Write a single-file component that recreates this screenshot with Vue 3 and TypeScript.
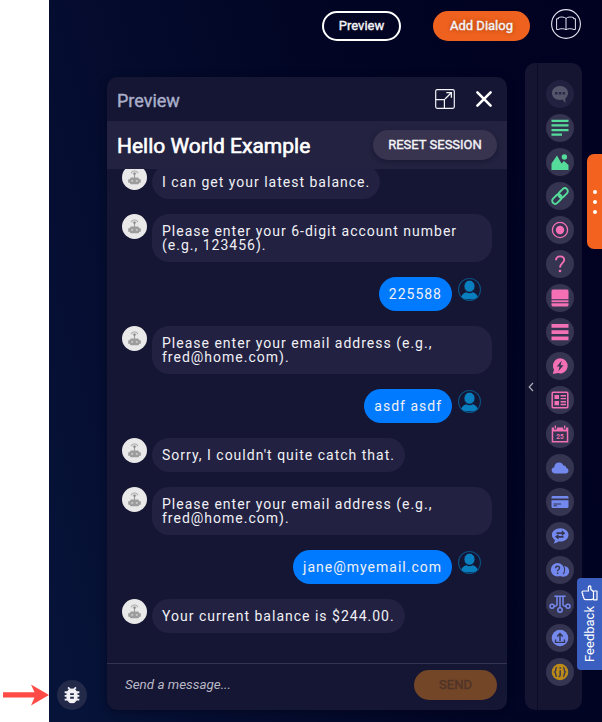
<script setup lang="ts">
interface Message {
  from: 'bot' | 'user'
  text: string
}

const messages: Message[] = [
  { from: 'bot', text: 'I can get your latest balance.' },
  { from: 'bot', text: 'Please enter your 6-digit account number (e.g., 123456).' },
  { from: 'user', text: '225588' },
  { from: 'bot', text: 'Please enter your email address (e.g., fred@home.com).' },
  { from: 'user', text: 'asdf asdf' },
  { from: 'bot', text: "Sorry, I couldn't quite catch that." },
  { from: 'bot', text: 'Please enter your email address (e.g., fred@home.com).' },
  { from: 'user', text: 'jane@myemail.com' },
  { from: 'bot', text: 'Your current balance is $244.00.' },
]

type Tone = 'muted' | 'green' | 'pink' | 'blue' | 'gold'

const tools: { name: string; tone: Tone }[] = [
  { name: 'chat', tone: 'muted' },
  { name: 'text', tone: 'green' },
  { name: 'image', tone: 'green' },
  { name: 'link', tone: 'green' },
  { name: 'radio', tone: 'pink' },
  { name: 'question', tone: 'pink' },
  { name: 'card', tone: 'pink' },
  { name: 'list', tone: 'pink' },
  { name: 'quick', tone: 'pink' },
  { name: 'form', tone: 'pink' },
  { name: 'calendar', tone: 'pink' },
  { name: 'cloud', tone: 'blue' },
  { name: 'payment', tone: 'blue' },
  { name: 'transfer', tone: 'blue' },
  { name: 'faq', tone: 'blue' },
  { name: 'branch', tone: 'blue' },
  { name: 'upload', tone: 'blue' },
  { name: 'json', tone: 'gold' },
]
</script>

<template>
  <div class="page">
    <aside class="gutter">
      <svg class="arrow" width="46" height="22" viewBox="0 0 46 22">
        <path d="M0 8.3H31.5L28 0.5L46 11L28 21.5L31.5 13.5H0Z" fill="#ff4b45" />
      </svg>
    </aside>

    <main class="stage">
      <header class="topbar">
        <button class="btn outline">Preview</button>
        <button class="btn primary">Add Dialog</button>
        <button class="docs" aria-label="Docs">
          <svg width="30" height="30" viewBox="0 0 30 30" fill="none" stroke="#e6e6f2">
            <circle cx="15" cy="15" r="14.4" stroke-width="1.1" />
            <path
              d="M15 9.500C13.500 7.900 10.500 7.600 7.500 8.500V9.700H5.600V20.500H7C10 19.300 13 19.500 15 20.700C17 19.500 20 19.300 23 20.500H24.400V9.700H22.500V8.500C19.500 7.600 16.500 7.900 15 9.500ZM15 9.500V20.700"
              stroke-width="1"
            />
          </svg>
        </button>
      </header>

      <div class="workspace">
        <div class="rail">
          <button class="bug" aria-label="Debug">
            <svg width="22" height="22" viewBox="0 0 24 24" fill="#f1f1f5">
              <path
                d="M20 8h-2.8a6 6 0 0 0-1.8-2L17 4.4 15.6 3l-2.2 2.2a6 6 0 0 0-2.8 0L8.4 3 7 4.4 8.6 6a6 6 0 0 0-1.8 2H4v2h2.1l-.1 1v1H4v2h2v1l.1 1H4v2h2.8a6 6 0 0 0 10.4 0H20v-2h-2.1l.1-1v-1h2v-2h-2v-1l-.1-1H20Zm-6 8h-4v-2h4Zm0-4h-4v-2h4Z"
              />
            </svg>
          </button>
        </div>

        <section class="panel">
          <div class="panel-head">
            <span class="panel-title">Preview</span>
            <svg class="expand" width="20" height="20" viewBox="0 0 20 20" fill="none" stroke="#f2f2f7">
              <rect x=".7" y=".7" width="18.6" height="18.6" rx="1.5" stroke-width="1.2" />
              <path d="M.7 10.6H9.4V19.3" stroke-width="1.2" />
              <path d="M10 10L16 4M11.3 3.6H16.4V8.7" stroke-width="1.3" />
            </svg>
            <svg class="close" width="18" height="18" viewBox="0 0 18 18" stroke="#fff" stroke-width="2.6" stroke-linecap="round">
              <path d="M2.4 2.4L15.6 15.6M15.6 2.4L2.4 15.6" />
            </svg>
          </div>

          <div class="panel-sub">
            <h1>Hello World Example</h1>
            <button class="btn reset">RESET SESSION</button>
          </div>

          <div class="thread">
            <div v-for="(m, i) in messages" :key="i" class="row" :class="m.from">
              <svg v-if="m.from === 'bot'" class="avatar" width="25" height="25" viewBox="0 0 25 25">
                <circle cx="12.5" cy="12.5" r="12.5" fill="#e9e9e9" />
                <g fill="none" stroke="#b5b5b5">
                  <path d="M9 8.2A3.8 3.8 0 0 1 16 8.2" stroke-width="1.2" />
                  <path d="M10.7 9A2 2 0 0 1 14.3 9" stroke-width=".8" />
                  <path d="M12.5 8.6V13" stroke="#9b9b9b" stroke-width="1.1" />
                </g>
                <circle cx="12.5" cy="8.8" r="1.2" fill="#8d8d8d" />
                <path d="M8.800 12.600H16.200L17.300 14.200H18.800V17.800H17.300L16.500 19.300H8.500L7.700 17.800H6.200V14.200H7.700Z" fill="#9c9c9c" />
                <rect x="9.2" y="15" width="2" height="1.700" rx=".8" fill="#cfcfcf" />
                <rect x="13.8" y="15" width="2" height="1.700" rx=".8" fill="#cfcfcf" />
              </svg>
              <p class="bubble">{{ m.text }}</p>
              <svg v-if="m.from === 'user'" class="avatar" width="25" height="25" viewBox="0 0 25 25">
                <circle cx="12.5" cy="12.5" r="11" fill="none" stroke="#0b4f80" stroke-width="1.1" />
                <path
                  d="M4.3 20C5.2 17 7 15.7 9.5 15.3C11.2 16.7 13.8 16.7 15.5 15.3C18 15.7 19.8 17 20.7 20C18.600 22 15.800 22.300 12.500 22.300S6.400 22 4.300 20Z"
                  fill="#0a7fc0"
                />
                <ellipse cx="12.5" cy="9.2" rx="5.500" ry="6" fill="#0a7fc0" stroke="#151534" stroke-width=".8" />
              </svg>
            </div>
          </div>

          <footer class="composer">
            <span class="placeholder">Send a message...</span>
            <button class="btn send">SEND</button>
          </footer>
        </section>

        <nav class="tools">
          <div class="handle">
            <svg width="6" height="10" viewBox="0 0 6 10" fill="none" stroke="#b4b4c0" stroke-width="1.1">
              <path d="M5 1L1.2 5L5 9" />
            </svg>
          </div>
          <div class="tool-list">
            <div v-for="t in tools" :key="t.name" class="tool" :class="t.tone">
              <svg width="18" height="18" viewBox="0 0 18 18" fill="currentColor">
                <g v-if="t.name === 'chat'">
                  <path d="M9 1C4.3 1 1 4 1 8s3.3 7 8 7c1 0 1.800-.1 2.600-.4L14.300 18V13.300C16 12 17 10.200 17 8c0-4-3.300-7-8-7Z" />
                  <path d="M4 7H6.500V9.500H4ZM7.800 7H10.300V9.500H7.800ZM11.600 7H14.100V9.500H11.600Z" class="hole" />
                </g>
                <path v-else-if="t.name === 'text'" d="M.5.700H17.500V3H.5ZM.5 5.300H17.500V7.600H.5ZM.5 9.900H17.500V12.200H.5ZM.5 14.500H11V16.800H.5Z" />
                <g v-else-if="t.name === 'image'">
                  <path d="M.5 17V10.500L6 2.500L10.500 10.500L13 8L17.500 12V17Z" />
                  <circle cx="13.400" cy="4" r="2.700" />
                </g>
                <g v-else-if="t.name === 'link'" fill="none" stroke="currentColor" stroke-width="1.900">
                  <rect x="-5.400" y="-3" width="10.800" height="6" rx="3" transform="translate(12.100 5.900) rotate(-45)" />
                  <rect x="-5.400" y="-3" width="10.800" height="6" rx="3" transform="translate(5.900 12.100) rotate(-45)" />
                </g>
                <g v-else-if="t.name === 'radio'">
                  <circle cx="9" cy="9" r="7.600" fill="none" stroke="currentColor" stroke-width="1.300" />
                  <circle cx="9" cy="9" r="4.200" />
                </g>
                <g v-else-if="t.name === 'question'">
                  <path d="M5 5.200C5 2.700 6.700 1.400 9 1.400S13.200 2.800 13.200 5C13.200 8 9 8.400 9 12.500" fill="none" stroke="currentColor" stroke-width="1.900" />
                  <circle cx="9" cy="16" r="1.300" />
                </g>
                <g v-else-if="t.name === 'card'">
                  <path d="M2 .5H16Q17.500.5 17.500 2V10.200H.5V2Q.5.5 2 .5ZM.5 11.200H17.500V13.200H.5ZM.5 14.200H17.500V16Q17.500 17.500 16 17.500H2Q.5 17.500.5 16Z" />
                </g>
                <path v-else-if="t.name === 'list'" d="M.5 1H17.500V4.700H.5ZM.5 7.200H17.500V11H.5ZM.5 13.500H17.500V17.200H.5Z" />
                <g v-else-if="t.name === 'quick'">
                  <path d="M9.300 1.200A7.600 7.600 0 1 1 7 16.100L1.800 17L3 12.700A7.600 7.600 0 0 1 9.300 1.200Z" />
                  <path d="M10.700 3.800L5.700 9.500H8.600L7.300 14.200L12.600 8.200H9.600Z" class="hole" />
                </g>
                <g v-else-if="t.name === 'form'">
                  <rect x="1.200" y="1.200" width="15.600" height="15.600" rx="1" fill="none" stroke="currentColor" stroke-width="1.500" />
                  <path d="M3.500 4H8V8H3.500ZM3.500 10H8V14.200H3.500ZM9.600 4H15V5.500H9.600ZM9.600 6.900H15V8.300H9.600ZM9.600 10H15V11.400H9.600ZM9.600 12.800H15V14.200H9.600Z" />
                </g>
                <g v-else-if="t.name === 'calendar'">
                  <path d="M.7 2.600H3V4.500H5.800V2.600H12.200V4.500H15V2.600H17.300V17.500H.7ZM2.200 6.600V16H15.800V6.600Z" fill-rule="evenodd" />
                  <path d="M3.700.5H5V3.500H3.700ZM13 .5H14.300V3.500H13Z" />
                  <text x="9" y="13.900" text-anchor="middle" class="day">25</text>
                </g>
                <path v-else-if="t.name === 'cloud'" d="M4.300 14.500C2.200 14.500.6 13.200.6 11.300C.6 9.600 1.800 8.400 3.300 8.200C3.300 5.300 5.300 3.500 8 3.500C10.200 3.500 11.800 4.700 12.300 6.600C14 6.200 15.300 7.400 15.300 9C16.700 9.300 17.500 10.400 17.500 11.700C17.500 13.300 16.300 14.500 14.500 14.500Z" />
                <g v-else-if="t.name === 'payment'">
                  <path d="M1.800 3H16.200Q17.500 3 17.500 4.300V5.500H.5V4.300Q.5 3 1.800 3ZM.5 7.300H17.500V13.700Q17.500 15 16.200 15H1.800Q.5 15 .5 13.700Z" />
                  <path d="M2.500 10.600H10V11.500H2.500ZM2.500 12.300H6V13.200H2.500Z" class="hole" />
                </g>
                <g v-else-if="t.name === 'transfer'">
                  <path d="M9.300 1.200C4.600 1.200.9 4.200.9 7.900C.9 9.900 2.200 11.700 3.900 12.900C3.900 14.300 3.200 15.600 2.500 16.600C4.600 16.300 6.200 15.500 7.300 14.500C13 15.100 17.500 12 17.500 7.900C17.500 4.200 14 1.200 9.300 1.200Z" />
                  <path d="M5.500 7V5.300H10.800V3.300L14.300 6.200L10.800 9.100V7ZM12.500 9V10.700H7.500V12.600L4 9.800L7.500 7V9Z" class="hole" />
                </g>
                <g v-else-if="t.name === 'faq'">
                  <circle cx="13" cy="10.200" r="5.200" />
                  <circle cx="6.700" cy="8.700" r="7.500" class="hole" />
                  <circle cx="6.500" cy="8.700" r="6.700" />
                  <path d="M12 11.500L12.800 15.800L8 14.900Z" />
                  <path d="M4.600 7.200Q4.600 5.200 6.600 5.200T8.500 7Q8.500 8.300 6.600 9.500V10.300M6.600 11.600V12.900" class="cut" />
                </g>
                <g v-else-if="t.name === 'branch'" fill="none" stroke="currentColor" stroke-width="1.500">
                  <path d="M3.300 1.200H14.700M6 1.200V9.500Q6 11.500 1.500 11.500M9 1.200V13M12 1.200V9.500Q12 11.500 16.500 11.500" />
                  <g class="node">
                    <circle cx="1" cy="11.300" r="2" /><circle cx="9" cy="15" r="2.200" /><circle cx="17" cy="11.300" r="2" />
                  </g>
                </g>
                <g v-else-if="t.name === 'upload'">
                  <circle cx="9" cy="9" r="8.300" />
                  <path d="M9 12V5M6.200 7.400L9 4.600L11.800 7.400M4.500 10.500V13.400H13.500V10.500" class="cut" />
                </g>
                <g v-else>
                  <circle cx="9" cy="9" r="8.300" />
                  <path d="M5.900 4.500C4 4.500 5.500 8 3.700 9C5.500 10 4 13.500 5.900 13.500M12.100 4.500C14 4.500 12.500 8 14.300 9C12.500 10 14 13.500 12.100 13.500M9.200 4.300V5.700M9.200 7.200V12.300Q9.200 13.500 7.700 13.500" class="cut" />
                </g>
              </svg>
            </div>
          </div>
        </nav>
      </div>

      <div class="more"><i></i><i></i><i></i></div>

      <div class="feedback">
        <svg width="17" height="17" viewBox="0 0 17 17" fill="none" stroke="#fff" stroke-width="1.200" stroke-linejoin="round">
          <path d="M16 6H12.500V14.800H16ZM12.500 6.800L9.800 4.200V1.800Q9.800 .9 8.900 .9Q7 1.100 7.300 4L7.600 6H2.400Q1 6 1 7.300Q1 8.300 1.800 8.700Q1.200 10.200 2.300 11Q2 12.300 2.900 12.900Q2.900 14.600 4.500 14.600H10.500L12.500 13.800" />
        </svg>
        <span>Feedback</span>
      </div>
    </main>
  </div>
</template>

<style>
body {
  background: #fff;
}
</style>

<style scoped>
.page {
  display: grid;
  grid-template-columns: 49px 1fr;
  width: 602px;
  height: 722px;
  overflow: hidden;
  font-family: Roboto, 'Liberation Sans', sans-serif;
}
.gutter {
  display: flex;
  flex-direction: column;
  justify-content: flex-end;
  align-items: flex-end;
  padding-bottom: 16px;
}
.stage {
  position: relative;
  background: linear-gradient(75deg, #07143a 0%, #050d30 25%, #020524 60%, #010122 100%);
}
.topbar {
  display: flex;
  height: 63px;
  padding: 9px 21px 0 273px;
  box-sizing: border-box;
}
.btn {
  box-sizing: border-box;
  height: 30px;
  padding: 0;
  border: 0;
  border-radius: 15px;
  font: 400 13px/30px Roboto, sans-serif;
  -webkit-text-stroke: 0.4px currentColor;
  color: #f3f3f6;
  text-align: center;
  white-space: nowrap;
}
.topbar .btn {
  margin-top: 2px;
}
.outline {
  width: 79px;
  border: 2px solid #fff;
  background: transparent;
  line-height: 26px;
}
.primary {
  width: 97px;
  margin-left: 32px;
  background: #ef611e;
  text-shadow: 0 0 5px rgba(0, 0, 0, 0.45);
}
.docs {
  width: 30px;
  height: 30px;
  margin-left: 21px;
  padding: 0;
  border: 0;
  background: none;
}
.docs svg,
.feedback svg {
  display: block;
}
.workspace {
  display: flex;
  height: 647px;
}
.rail {
  display: flex;
  align-items: flex-end;
  width: 58px;
  padding-left: 8px;
  box-sizing: border-box;
}
.bug {
  display: grid;
  place-items: center;
  width: 30px;
  height: 30px;
  padding: 0;
  border: 0;
  border-radius: 50%;
  background: #232a49;
}
.panel {
  display: flex;
  flex-direction: column;
  width: 400px;
  margin-top: 14px;
  border-radius: 10px;
  background: #151534;
  box-shadow: 0 2px 8px rgba(0, 0, 16, 0.4);
  overflow: hidden;
}
.panel-head {
  display: flex;
  align-items: center;
  height: 44px;
  padding: 0 14px 0 10px;
}
.panel-title {
  flex: 1;
  padding-top: 2px;
  font-size: 18px;
  -webkit-text-stroke: 0.4px currentColor;
  color: #a9afc9;
}
.close {
  margin-left: 20px;
}
.panel-sub {
  display: flex;
  align-items: center;
  justify-content: space-between;
  height: 48px;
  padding: 0 10px;
  background: #232341;
}
.panel-sub h1 {
  margin: 2px 0 0;
  font-size: 21px;
  font-weight: 400;
  -webkit-text-stroke: 0.6px currentColor;
  color: #fff;
}
.reset {
  width: 124px;
  background: #38344f;
  box-shadow: 0 2px 5px rgba(10, 10, 35, 0.4);
}
.thread {
  flex: 1;
  min-height: 0;
  display: flex;
  flex-direction: column;
  justify-content: flex-end;
  gap: 15px;
  padding: 0 15px 30px;
  overflow: hidden;
}
.row {
  display: flex;
  flex: none;
  align-items: flex-start;
  gap: 5px;
}
.row.user {
  justify-content: flex-end;
  padding-right: 10px;
}
.avatar {
  flex: none;
}
.bubble {
  box-sizing: border-box;
  margin: 0;
  padding: 10px;
  border-radius: 17px;
  background: #222141;
  color: #f0f0f5;
  font-size: 14px;
  line-height: 14px;
  letter-spacing: 1px;
}
.user .bubble {
  background: #007bff;
}
.composer {
  display: flex;
  align-items: center;
  justify-content: space-between;
  height: 47px;
  padding: 0 10px 4px 18px;
  box-sizing: border-box;
  border-top: 1px solid #353450;
}
.placeholder {
  padding-bottom: 2px;
  font-size: 13.4px;
  font-style: italic;
  color: #b9b9c5;
}
.send {
  width: 83px;
  background: #724627;
  color: #4f3328;
}
.tools {
  display: flex;
  width: 57px;
  margin-left: 18px;
  border-radius: 10px;
  background: #151532;
  overflow: hidden;
}
.handle {
  display: flex;
  align-items: center;
  justify-content: center;
  width: 13px;
  box-sizing: border-box;
  border-right: 1px solid #0a0a29;
}
.tool-list {
  display: flex;
  flex-direction: column;
  gap: 6px;
  padding: 17px 8px;
}
.tool {
  display: grid;
  place-items: center;
  flex: none;
  width: 28px;
  height: 28px;
  border-radius: 50%;
  background: #353551;
}
.tool svg {
  overflow: visible;
}
.tool .hole,
.tool .node {
  fill: #353551;
}
.tool .cut {
  fill: none;
  stroke: #353551;
  stroke-width: 1.4;
}
.day {
  font: 700 6.5px Roboto, sans-serif;
}
.tool.muted {
  background: #222240;
  color: #55556b;
}
.tool.muted .hole {
  fill: #28284a;
}
.green {
  color: #55dc9b;
}
.pink {
  color: #f470b4;
}
.blue {
  color: #7489ee;
}
.gold {
  color: #bb8a18;
}
.more {
  position: absolute;
  top: 154px;
  right: 0;
  display: flex;
  flex-direction: column;
  align-items: center;
  justify-content: center;
  gap: 6px;
  width: 15px;
  height: 95px;
  border-radius: 7px 0 0 7px;
  background: #f3621f;
}
.more i {
  width: 4px;
  height: 4px;
  border-radius: 50%;
  background: #fff;
}
.feedback {
  position: absolute;
  top: 578px;
  right: 0;
  display: flex;
  flex-direction: column;
  align-items: center;
  gap: 4px;
  width: 25px;
  height: 92px;
  padding-top: 7px;
  box-sizing: border-box;
  border-radius: 4px 0 0 4px;
  background: #3b5fc0;
  color: #fff;
}
.feedback span {
  writing-mode: vertical-rl;
  transform: rotate(180deg);
  font-size: 13px;
  line-height: 16px;
}
</style>
